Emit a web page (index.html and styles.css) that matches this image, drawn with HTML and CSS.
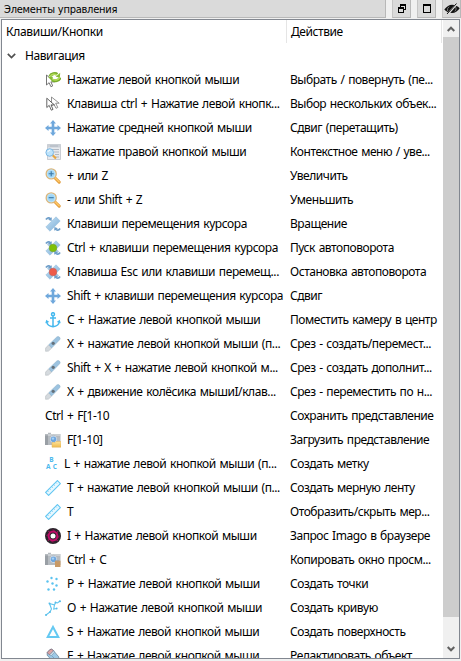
FILE: index.html
```html
<!DOCTYPE html>
<html lang="ru">
<head>
<meta charset="utf-8">
<title>Элементы управления</title>
<link rel="stylesheet" href="styles.css">
</head>
<body>
<svg class="defs" aria-hidden="true">
<defs>
<linearGradient id="blue" x1="0" y1="0" x2="1" y2="1"><stop offset="0" stop-color="#c5e3f6"/><stop offset="1" stop-color="#7dadd6"/></linearGradient>
<linearGradient id="gold" x1="0" y1="0" x2="0" y2="1"><stop offset="0" stop-color="#ffe39a"/><stop offset="1" stop-color="#eebb4e"/></linearGradient>
<symbol id="rotate" viewBox="0 0 16 16"><path d="M1.5 3v10l2.6-2.3 1.8 4 1.8-.8-1.8-4h3.5z" fill="#fff" stroke="#666" stroke-width=".9"/><path d="M4.8 4.5C6 1.5 10.5.8 12.2 2.4M15 5.5c-.7 3.1-5.5 4.2-7.7 2.4" fill="none" stroke="#79ad2c" stroke-width="3"/><path d="M10.7 4.7 15.2.8l-.3 4.6zM3.2 5l4.6-.3-.3 5z" fill="#86bb35"/><path d="M5.2 4.2C6.8 2 10 1.5 12 3M14.5 5.8c-1.2 2.2-4.8 2.9-6.7 1.6" fill="none" stroke="#b4dc5c" stroke-width="1.5"/></symbol>
<symbol id="multi" viewBox="0 0 16 16"><path d="M6.5 1v9l2.3-2 2.2 4.3 1.8-.8-2.1-4.3h3.5z" fill="#fff" stroke="#777" stroke-width=".8"/><path d="M1.8 2.2v9.3l2.4-2.1 2.1 4.8 1.7-.8-2-4.5h3.3z" fill="#fff" stroke="#555" stroke-width=".9"/></symbol>
<symbol id="move" viewBox="0 0 16 16"><path d="m8 0 3 3.5H9.3v3.2h3.2V5L16 8l-3.5 3V9.3H9.3v3.2H11L8 16l-3-3.5h1.7V9.3H3.5V11L0 8l3.5-3v1.7h3.2V3.5H5z" fill="#6fa8dc"/></symbol>
<symbol id="context" viewBox="0 0 16 16"><path d="M2.5.5h13v15h-13z" fill="#e7eaee" stroke="#b7bcc3" stroke-width=".7"/><path d="M2.5.5h13v3h-13z" fill="#cbd0d7"/><path d="M5 2h8M4 5.5h10M9 8h5M10 10.5h4M10 13h4" stroke="#aab2bc" stroke-width=".9"/><path d="m7.5 11 3.5 3.5" stroke="#e8a742" stroke-width="2.2"/><circle cx="4.7" cy="8.5" r="3.8" fill="#bde3fb" stroke="#7db7e2"/><path d="M2.8 8q.5-1.9 2.5-1.9" stroke="#fff" fill="none"/></symbol>
<symbol id="lens" viewBox="0 0 16 16"><path d="m9.8 9.8 4.4 4.3" stroke="#e09a38" stroke-width="3" stroke-linecap="round"/><path d="m10 9.7 4.1 4" stroke="#ffc766" stroke-width="1.6" stroke-linecap="round"/><circle cx="6.2" cy="5.9" r="5" fill="#9ed6f7" stroke="#dcb67a" stroke-width="1.4"/><circle cx="6.2" cy="5.9" r="4" fill="none" stroke="#c9e9fa" stroke-width=".7"/></symbol>
<symbol id="plus" viewBox="0 0 16 16"><use href="#lens"/><path d="M3.7 5.7h5M6.2 3.2v5" stroke="#3977a5" stroke-width="1.1"/></symbol>
<symbol id="minus" viewBox="0 0 16 16"><use href="#lens"/><path d="M3.7 5.7h5" stroke="#3977a5" stroke-width="1.1"/></symbol>
<symbol id="spin" viewBox="0 0 16 16"><path d="M11 .8 15.2 5 5 15.2.8 11z" fill="url(#blue)" stroke="#8fb9d8" stroke-width=".5"/><path d="M.9 3.6Q3.2.3 5.8 3M15.1 12.4q-2.3 3.3-4.9.6" fill="none" stroke="#6f9fca" stroke-width="1.7"/><path d="m6.8 1.2-.2 3.9-3.5-1.4zM9.2 14.8l.2-3.9 3.5 1.4z" fill="#6f9fca"/></symbol>
<symbol id="spinall" viewBox="0 0 16 16"><path d="m4.5 2 9.5 9.5-2.8 2.8L2 4.6z" fill="#a9c9e2"/><use href="#spin"/></symbol>
<symbol id="go" viewBox="0 0 16 16"><use href="#spinall"/><circle cx="8" cy="8" r="3.8" fill="#7fc008" stroke="#73a32a" stroke-width=".6"/></symbol>
<symbol id="stop" viewBox="0 0 16 16"><use href="#spinall"/><circle cx="8" cy="8" r="3.8" fill="#ee5a49" stroke="#c65f58" stroke-width=".6"/></symbol>
<symbol id="anchor" viewBox="0 0 16 16"><g fill="none" stroke="#45b8ee" stroke-width="1.5"><circle cx="8" cy="2.2" r="1.5"/><path d="M8 3.8v11M5 6h6M1.6 9.5q.6 4.6 6.4 5.2 5.8-.6 6.4-5.2"/></g><path d="m.3 11.3 1-3.6 3 2.4zM15.7 11.3l-1-3.6-3 2.4z" fill="#45b8ee"/></symbol>
<symbol id="knife" viewBox="0 0 16 16"><path d="M.6 15.3v-3.2l3-3.2 3.2 3.2-3.4 3z" fill="#d5dade" stroke="#b2b9be" stroke-width=".6"/><path d="m3.8 8.7 8-7.7q1.4-1.1 2.6.1 1.3 1.2.2 2.7l-7.9 8.1z" fill="#9cc3e0" stroke="#8fb2cb" stroke-width=".6"/><circle cx="8.2" cy="7.3" r="1.6" fill="#65717a"/></symbol>
<symbol id="camera" viewBox="0 0 16 16"><path d="M0 2h3V.8h3V2h9.5v11H0z" fill="#b6bbc0"/><path d="M0 3.5h3V13H0z" fill="#999fa5"/><path d="M3 3h12" stroke="#e1e4e7"/><circle cx="8.5" cy="7.3" r="4" fill="#dce3eb" stroke="#a0a8b0" stroke-width=".6"/><circle cx="8.5" cy="7.3" r="2.8" fill="#6da6df"/><circle cx="8" cy="6.6" r="1.2" fill="#a6d2f5"/></symbol>
<symbol id="load" viewBox="0 0 16 16"><use href="#camera"/><path d="M7 10.5h3l1-1h5v5.7H7z" fill="url(#gold)" stroke="#e0b760" stroke-width=".5"/></symbol>
<symbol id="copy" viewBox="0 0 16 16"><use href="#camera"/><path d="M10 8.7h5.5v6.3H10z" fill="#c99a66"/><path d="M11.2 8.2H14v1.2h-2.8z" fill="#a9a197"/></symbol>
<symbol id="ruler" viewBox="0 0 16 16"><path d="M.6 12.3 12.4.6l3 3L3.6 15.4z" fill="#e8f8ff" stroke="#62c6f2" stroke-width="1.1"/><path d="m2.4 10.8 1.2 1.2M4.5 8.7l1.2 1.2M6.6 6.6l1.2 1.2M8.7 4.5l1.2 1.2m.9-3.3L12 3.6" stroke="#62c6f2" stroke-width=".7"/></symbol>
<symbol id="imago" viewBox="0 0 16 16"><circle cx="8" cy="8" r="8" fill="#2b242b"/><circle cx="8" cy="8" r="4.4" fill="none" stroke="#c00c69" stroke-width="2"/><path d="m3 3 2.5 1.6M13 3l-1.6 2.5M13 13l-2.5-1.6M3 13l1.6-2.5M8 1.5l1.8 1.8M14.5 8l-1.8 1.8M8 14.5l-1.8-1.8M1.5 8l1.8-1.8" stroke="#c00c69" stroke-width=".8"/><circle cx="8" cy="8" r="2.5" fill="#fff"/></symbol>
<symbol id="points" viewBox="0 0 16 16"><g fill="#5ac2ef"><circle cx="6.5" cy="2" r="1.2"/><circle cx="11.5" cy="3" r="1.2"/><circle cx="2.5" cy="5.5" r="1.2"/><circle cx="7.5" cy="7.5" r="1.2"/><circle cx="11.5" cy="9.5" r="1.2"/><circle cx="3.5" cy="13.5" r="1.2"/><circle cx="9" cy="13.5" r="1.2"/></g></symbol>
<symbol id="curve" viewBox="0 0 16 16"><path d="m1 15 4-3L6.5 9 4.5 3.5 9.5 5 8.7 9l3-.5M9.5 5l1-2.5 2 .5L15 1" fill="none" stroke="#5fc5ee" stroke-width="1.1"/><g fill="#55bce9"><circle cx="1" cy="15" r="1"/><circle cx="5" cy="12" r=".9"/><circle cx="4.5" cy="3.5" r=".9"/><circle cx="10.5" cy="2.5" r=".9"/><circle cx="15" cy="1.2" r="1"/><circle cx="11.7" cy="8.5" r=".9"/></g></symbol>
<symbol id="triangle" viewBox="0 0 16 16"><path d="m8 3 5.3 10H2.7z" fill="none" stroke="#65c9f2" stroke-width="2"/></symbol>
<symbol id="pencil" viewBox="0 0 16 16"><path d="M2.2 4.4 5 1.6q1.5-1 2.8.3l6 7-.2 5.8-5.2-.5-6.2-7z" fill="#9ec9e5" stroke="#617b91" stroke-width=".7"/><path d="M2.2 4.5 5 1.6q1.5-1 2.8.3l.8 1-3.8 4-2.5-2z" fill="#dba4a5" stroke="#75606e" stroke-width=".6"/><path d="m4.8 6.8 3.8-4 1 1.3-3.7 4zM7 8l5 5" fill="#dfe9ef" stroke="#668ca8" stroke-width=".6"/></symbol>
</defs>
</svg>
<main class="dock">
<header class="titlebar">
<div class="title"><span>Элементы управления</span></div>
<div class="button"><svg width="8" height="9" viewBox="0 0 8 9" shape-rendering="crispEdges"><path d="M2 0h6v6H6V5h1V2H3v1H2zM0 3h6v6H0zM1 5v3h4V5z" fill="#000" fill-rule="evenodd"/></svg></div>
<div class="button"><svg width="8" height="9" viewBox="0 0 8 9" shape-rendering="crispEdges"><path d="M0 0h8v9H0zM1 2v6h6V2z" fill="#000" fill-rule="evenodd"/></svg></div>
<div class="button"><svg width="16" height="12" viewBox="0 0 16 12"><path d="M.3 6.5Q4 1.8 8 1.8q4.5 0 7.7 3.5Q12.5 10 8 10 3.5 10 .3 6.5z" fill="#111"/><path d="M3.5 8Q3 5 5.2 3.7M11.5 3.6q1.7 2.5-.6 4.8" fill="none" stroke="#bbb" stroke-width=".6"/><path d="M3.8 11 13.2.5" stroke="#ddd" stroke-width="2"/><path d="M3 11 12.5.5" stroke="#111" stroke-width="1"/></svg></div>
</header>
<section class="panel">
<div class="content">
<div class="heads"><div class="head key">Клавиши/Кнопки</div><div class="head action">Действие</div></div>
<div class="group"><svg width="9" height="6" viewBox="0 0 9 6"><path d="m.8.8 3.7 3.7L8.2.8" fill="none" stroke="#505050" stroke-width="1.7"/></svg><span>Навигация</span></div>
<div class="rows">
<div class="row"><div class="key"><svg class="icon"><use href="#rotate"/></svg><span>Нажатие левой кнопкой мыши</span></div><div class="action">Выбрать / повернуть (пе...</div></div>
<div class="row"><div class="key"><svg class="icon"><use href="#multi"/></svg><span>Клавиша ctrl + Нажатие левой кнопк...</span></div><div class="action">Выбор нескольких объек...</div></div>
<div class="row"><div class="key"><svg class="icon"><use href="#move"/></svg><span>Нажатие средней кнопкой мыши</span></div><div class="action">Сдвиг (перетащить)</div></div>
<div class="row"><div class="key"><svg class="icon"><use href="#context"/></svg><span>Нажатие правой кнопкой мыши</span></div><div class="action">Контекстное меню / уве...</div></div>
<div class="row"><div class="key"><svg class="icon"><use href="#plus"/></svg><span>+ или Z</span></div><div class="action">Увеличить</div></div>
<div class="row"><div class="key"><svg class="icon"><use href="#minus"/></svg><span>- или Shift + Z</span></div><div class="action">Уменьшить</div></div>
<div class="row"><div class="key"><svg class="icon"><use href="#spin"/></svg><span>Клавиши перемещения курсора</span></div><div class="action">Вращение</div></div>
<div class="row"><div class="key"><svg class="icon"><use href="#go"/></svg><span>Ctrl + клавиши перемещения курсора</span></div><div class="action">Пуск автоповорота</div></div>
<div class="row"><div class="key"><svg class="icon"><use href="#stop"/></svg><span>Клавиша Esc или клавиши перемещ...</span></div><div class="action">Остановка автоповорота</div></div>
<div class="row"><div class="key"><svg class="icon"><use href="#move"/></svg><span>Shift + клавиши перемещения курсора</span></div><div class="action">Сдвиг</div></div>
<div class="row"><div class="key"><svg class="icon"><use href="#anchor"/></svg><span>C + Нажатие левой кнопкой мыши</span></div><div class="action">Поместить камеру в центр</div></div>
<div class="row"><div class="key"><svg class="icon"><use href="#knife"/></svg><span>X + нажатие левой кнопкой мыши (п...</span></div><div class="action">Срез - создать/перемест...</div></div>
<div class="row"><div class="key"><svg class="icon"><use href="#knife"/></svg><span>Shift + X + нажатие левой кнопкой м...</span></div><div class="action">Срез - создать дополнит...</div></div>
<div class="row"><div class="key"><svg class="icon"><use href="#knife"/></svg><span>X + движение колёсика мышиI/клав...</span></div><div class="action">Срез - переместить по н...</div></div>
<div class="row"><div class="key"><span>Ctrl + F[1-10</span></div><div class="action">Сохранить представление</div></div>
<div class="row"><div class="key"><svg class="icon"><use href="#load"/></svg><span>F[1-10]</span></div><div class="action">Загрузить представление</div></div>
<div class="row"><div class="key"><span class="abc"><b>B</b><b>A</b><b>C</b></span><span>L + нажатие левой кнопкой мыши (п...</span></div><div class="action">Создать метку</div></div>
<div class="row"><div class="key"><svg class="icon"><use href="#ruler"/></svg><span>T + нажатие левой кнопкой мыши (п...</span></div><div class="action">Создать мерную ленту</div></div>
<div class="row"><div class="key"><svg class="icon"><use href="#ruler"/></svg><span>T</span></div><div class="action">Отобразить/скрыть мер...</div></div>
<div class="row"><div class="key"><svg class="icon"><use href="#imago"/></svg><span>I + Нажатие левой кнопкой мыши</span></div><div class="action">Запрос Imago в браузере</div></div>
<div class="row"><div class="key"><svg class="icon"><use href="#copy"/></svg><span>Ctrl + C</span></div><div class="action">Копировать окно просм...</div></div>
<div class="row"><div class="key"><svg class="icon"><use href="#points"/></svg><span>P + Нажатие левой кнопкой мыши</span></div><div class="action">Создать точки</div></div>
<div class="row"><div class="key"><svg class="icon"><use href="#curve"/></svg><span>O + Нажатие левой кнопкой мыши</span></div><div class="action">Создать кривую</div></div>
<div class="row"><div class="key"><svg class="icon"><use href="#triangle"/></svg><span>S + Нажатие левой кнопкой мыши</span></div><div class="action">Создать поверхность</div></div>
<div class="row"><div class="key"><svg class="icon"><use href="#pencil"/></svg><span>E + Нажатие левой кнопкой мыши</span></div><div class="action">Редактировать объект</div></div>
</div>
</div>
<aside class="scrollbar">
<div class="arrow"><svg width="8" height="6" viewBox="0 0 8 6"><path d="m.7 5 3.3-3.3L7.3 5" fill="none" stroke="#606060" stroke-width="2"/></svg></div>
<div class="thumb"></div>
<div class="arrow down"><svg width="8" height="6" viewBox="0 0 8 6"><path d="m.7 1 3.3 3.3L7.3 1" fill="none" stroke="#606060" stroke-width="2"/></svg></div>
</aside>
</section>
</main>
</body>
</html>
```
FILE: styles.css
```css
* { box-sizing: border-box; }
body { margin: 0; background: #f0f0f0; color: #000; font: 12px/24px "Noto Sans", sans-serif; overflow: hidden; }
.defs { display: block; width: 0; height: 0; }
.dock { height: 661px; width: 461px; }
.titlebar { display: flex; gap: 6px; height: 19px; padding-bottom: 1px; }
.title, .button { background: #dadada; border-right: 1px solid #b8b8b8; border-bottom: 1px solid #b8b8b8; }
.title { width: 386px; padding-left: 4px; font: 11px/19px "DejaVu Sans Condensed", "DejaVu Sans", sans-serif; font-stretch: condensed; white-space: nowrap; }
.title span { letter-spacing: -.25px; }
.button { width: 19px; border-left: 1px solid #c5c5c5; display: flex; align-items: center; justify-content: center; flex: none; }
.button svg { flex: none; }
.panel { display: flex; width: 459px; height: 640px; margin-left: 1px; border: 1px solid #828790; background: #fff; overflow: hidden; letter-spacing: -.42px; word-spacing: 1px; }
.content { width: 441px; flex: none; }
.heads { display: flex; height: 23px; }
.head { border-right: 1px solid #e5e5e5; line-height: 24px; }
.heads .key { width: 285px; padding-left: 4px; letter-spacing: -.3px; }
.heads .action { width: 155px; padding-left: 4px; }
.group { height: 25px; display: flex; align-items: center; gap: 9px; padding-left: 5px; }
.row { display: flex; height: 24px; white-space: nowrap; }
.row .key { display: flex; flex: none; align-items: center; width: 288px; padding-left: 43px; gap: 6px; }
.row .action { flex: none; letter-spacing: -.46px; }
.icon { width: 16px; height: 16px; flex: none; margin-top: -1px; }
.abc { width: 13px; height: 14px; margin-top: -2px; display: grid; grid-template-columns: 1fr 1fr; grid-template-rows: 7px 7px; color: #49b8ed; font: 6.5px/7px "Open Sans", sans-serif; letter-spacing: 0; text-align: center; }
.abc b:first-child { grid-column: 1 / 3; }
.scrollbar { width: 16px; background: #f0f0f0; flex: none; }
.arrow { display: flex; height: 17px; align-items: center; justify-content: center; }
.thumb { height: 580px; background: #cdcdcd; }
.down { height: 41px; align-items: flex-end; padding-bottom: 6px; }
```
